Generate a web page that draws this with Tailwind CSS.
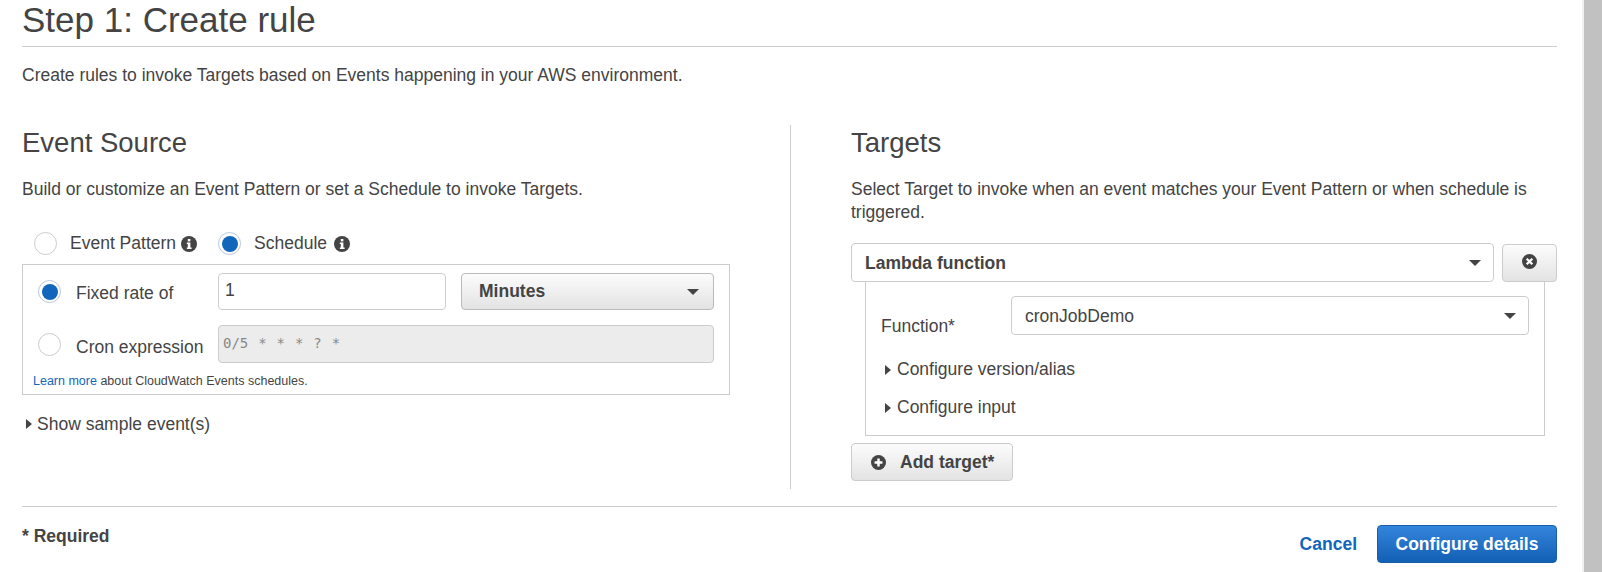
<!DOCTYPE html>
<html>
<head>
<meta charset="utf-8">
<script src="https://cdn.jsdelivr.net/npm/@tailwindcss/browser@4"></script>
</head>
<body class="bg-white overflow-hidden">
<div class="flex h-[572px] w-[1602px] overflow-hidden font-['Liberation_Sans',Arial,sans-serif] text-[17.5px] text-[#444]">
  <main class="w-[1582px] pl-[22px]">
    <div class="w-[1535px]">
      <h1 class="h-[47px] border-b border-[#ccc] pt-[1px] text-[35px] leading-[38px] font-normal">Step 1: Create rule</h1>
      <p class="h-[78px] pt-[17px] leading-[23px]">Create rules to invoke Targets based on Events happening in your AWS environment.</p>
      <div class="flex h-[364px]">
        <section class="w-[708px]">
          <h2 class="pt-[1px] text-[27.5px] leading-[34px]">Event Source</h2>
          <p class="mt-[18px] leading-[23px]">Build or customize an Event Pattern or set a Schedule to invoke Targets.</p>
          <div class="mt-[29px] flex h-[27px] items-center pl-[12px]">
            <span class="h-[23px] w-[23px] rounded-full border border-[#ccc] bg-white"></span>
            <span class="ml-[13px]">Event Pattern</span>
            <svg class="ml-[5px] h-[16px] w-[16px]" viewBox="0 0 16 16"><circle cx="8" cy="8" r="8" fill="#444"/><rect x="6.8" y="3" width="2.6" height="2.4" fill="#fff"/><path d="M5.8 6.6h3.6v5h1.2v1.5H5.8v-1.5h1v-3.5h-1z" fill="#fff"/></svg>
            <span class="ml-[21px] flex h-[23px] w-[23px] items-center justify-center rounded-full border border-[#b9c7da] bg-white"><span class="h-[16px] w-[16px] rounded-full bg-[#1166bb]"></span></span>
            <span class="ml-[13px]">Schedule</span>
            <svg class="ml-[7px] h-[16px] w-[16px]" viewBox="0 0 16 16"><circle cx="8" cy="8" r="8" fill="#444"/><rect x="6.8" y="3" width="2.6" height="2.4" fill="#fff"/><path d="M5.8 6.6h3.6v5h1.2v1.5H5.8v-1.5h1v-3.5h-1z" fill="#fff"/></svg>
          </div>
          <div class="mt-[7px] h-[131px] border border-[#ccc] pl-[15px] pr-[15px] pt-[8px]">
            <div class="flex h-[37px] items-center">
              <span class="flex h-[23px] w-[23px] items-center justify-center rounded-full border border-[#b9c7da]"><span class="h-[16px] w-[16px] rounded-full bg-[#1166bb]"></span></span>
              <span class="ml-[15px] w-[142px] pt-[4px]">Fixed rate of</span>
              <div class="flex h-full w-[228px] items-center rounded-[4px] border border-[#ccc] pl-[6px] pb-[2px]">1</div>
              <div class="ml-[15px] flex h-full w-[253px] items-center justify-between rounded-[4px] border border-[#bbb] bg-gradient-to-b from-[#fcfcfc] to-[#e3e3e3] pl-[17px] pr-[14px] font-bold">Minutes<span class="h-0 w-0 border-x-[6px] border-t-[6px] border-x-transparent border-t-[#444]"></span></div>
            </div>
            <div class="mt-[15px] flex h-[38px] items-center">
              <span class="h-[23px] w-[23px] rounded-full border border-[#ccc]"></span>
              <span class="ml-[15px] w-[142px] pt-[6px]">Cron expression</span>
              <div class="flex h-full w-[496px] items-center rounded-[4px] border border-[#ccc] bg-[#ececec] pl-[4px] pb-[2px] font-['DejaVu_Sans_Mono',monospace] text-[14px] text-[#888] [word-spacing:1.5px]">0/5 * * * ? *</div>
            </div>
            <p class="-ml-[5px] mt-[11px] text-[12.5px] leading-[15px]"><span class="text-[#1166bb]">Learn more</span> about CloudWatch Events schedules.</p>
          </div>
          <div class="mt-[18px] flex h-[22px] items-center pl-[4px]">
            <span class="h-0 w-0 border-y-[5px] border-l-[6px] border-y-transparent border-l-[#444]"></span>
            <span class="ml-[5px]">Show sample event(s)</span>
          </div>
        </section>
        <div class="ml-[60px] w-px bg-[#ccc]"></div>
        <section class="ml-[60px] w-[706px]">
          <h2 class="pt-[1px] text-[27.5px] leading-[34px]">Targets</h2>
          <p class="mt-[18px] leading-[23px]">Select Target to invoke when an event matches your Event Pattern or when schedule is triggered.</p>
          <div class="mt-[19px] flex items-center justify-between">
            <div class="flex h-[39px] w-[643px] items-center justify-between rounded-[4px] border border-[#ccc] pl-[13px] pr-[12px] pt-[1px] font-bold">Lambda function<span class="h-0 w-0 border-x-[6px] border-t-[6px] border-x-transparent border-t-[#444]"></span></div>
            <div class="flex h-[38px] w-[55px] items-center justify-center rounded-[4px] border border-[#ccc] bg-gradient-to-b from-[#fcfcfc] to-[#e3e3e3] pb-[2px]">
              <svg class="h-[15px] w-[15px]" viewBox="0 0 16 16"><circle cx="8" cy="8" r="8" fill="#444"/><path d="M5 5l6 6M11 5l-6 6" stroke="#fff" stroke-width="2.4"/></svg>
            </div>
          </div>
          <div class="ml-[14px] h-[154px] w-[680px] border-x border-b border-[#ccc] pl-[15px] pr-[15px] pt-[14px]">
            <div class="flex">
              <span class="w-[130px] pt-[19px] leading-[23px]">Function*</span>
              <div class="flex h-[39px] w-[518px] items-center justify-between rounded-[4px] border border-[#ccc] pl-[13px] pr-[12px] pt-[1px]">cronJobDemo<span class="h-0 w-0 border-x-[6px] border-t-[6px] border-x-transparent border-t-[#444]"></span></div>
            </div>
            <div class="ml-[4px] mt-[20px] flex h-[23px] items-center">
              <span class="h-0 w-0 border-y-[5px] border-l-[6px] border-y-transparent border-l-[#444]"></span>
              <span class="ml-[6px]">Configure version/alias</span>
            </div>
            <div class="ml-[4px] mt-[15px] flex h-[23px] items-center">
              <span class="h-0 w-0 border-y-[5px] border-l-[6px] border-y-transparent border-l-[#444]"></span>
              <span class="ml-[6px]">Configure input</span>
            </div>
          </div>
          <div class="mt-[7px] flex h-[38px] w-[162px] items-center rounded-[4px] border border-[#ccc] bg-gradient-to-b from-[#fcfcfc] to-[#e3e3e3] pl-[19px] font-bold">
            <svg class="h-[15px] w-[15px]" viewBox="0 0 16 16"><circle cx="8" cy="8" r="8" fill="#444"/><path d="M8 3.8v8.4M3.8 8h8.4" stroke="#fff" stroke-width="2.6"/></svg>
            <span class="ml-[14px]">Add target*</span>
          </div>
        </section>
      </div>
      <div class="flex h-[66px] items-start justify-between border-t border-[#ccc] mt-[17px]">
        <span class="mt-[18px] font-bold leading-[23px]">* Required</span>
        <div class="mt-[18px] flex items-center">
          <span class="font-bold text-[#1166bb]">Cancel</span>
          <div class="ml-[20px] flex h-[38px] w-[180px] items-center justify-center rounded-[4px] border border-[#1a5ea8] bg-gradient-to-b from-[#3385dc] to-[#1160b4] font-bold text-white">Configure details</div>
        </div>
      </div>
    </div>
  </main>
  <div class="ml-0 w-[20px] border-l-2 border-[#f1f1f1] bg-[#c1c1c1]"></div>
</div>
</body>
</html>
